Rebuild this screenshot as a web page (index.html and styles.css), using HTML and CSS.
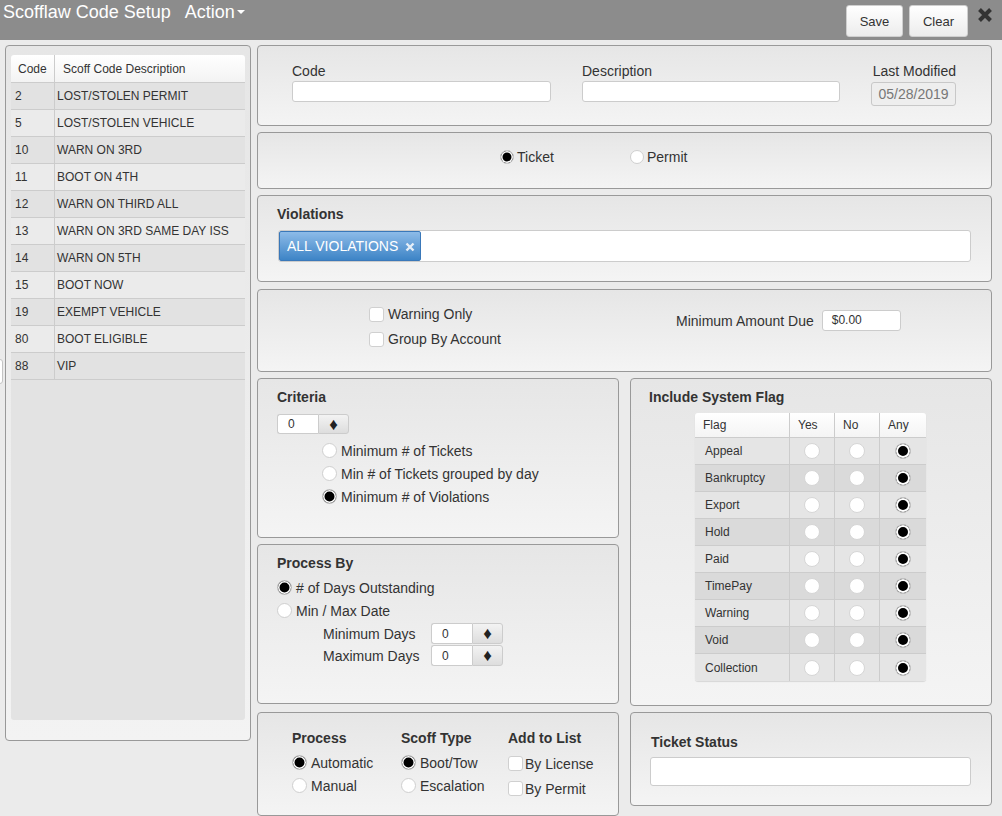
FILE: index.html
```html
<!DOCTYPE html>
<html>
<head>
<meta charset="utf-8">
<link rel="stylesheet" href="styles.css">
</head>
<body>
<header class="topbar">
  <div class="title">Scofflaw Code Setup</div>
  <div class="action">Action<span class="caret"></span></div>
  <button class="btn btn-save">Save</button>
  <button class="btn btn-clear">Clear</button>
  <svg class="close" viewBox="0 0 16 16" width="16" height="16"><path d="M2.5 2.5 L13.5 13.5 M13.5 2.5 L2.5 13.5" stroke="#333" stroke-width="4" fill="none"/></svg>
</header>
<div class="handle"></div>
<main class="main">
  <aside class="list-panel">
    <div class="list">
      <div class="row head"><span>Code</span><span>Scoff Code Description</span></div>
      <div class="row odd"><span>2</span><span>LOST/STOLEN PERMIT</span></div>
      <div class="row even"><span>5</span><span>LOST/STOLEN VEHICLE</span></div>
      <div class="row odd"><span>10</span><span>WARN ON 3RD</span></div>
      <div class="row even"><span>11</span><span>BOOT ON 4TH</span></div>
      <div class="row odd"><span>12</span><span>WARN ON THIRD ALL</span></div>
      <div class="row even"><span>13</span><span>WARN ON 3RD SAME DAY ISS</span></div>
      <div class="row odd"><span>14</span><span>WARN ON 5TH</span></div>
      <div class="row even"><span>15</span><span>BOOT NOW</span></div>
      <div class="row odd"><span>19</span><span>EXEMPT VEHICLE</span></div>
      <div class="row even"><span>80</span><span>BOOT ELIGIBLE</span></div>
      <div class="row odd"><span>88</span><span>VIP</span></div>
    </div>
  </aside>
  <section class="form">
    <div class="panel p-ident">
      <div class="field f-code"><label>Code</label><input class="txt" type="text"></div>
      <div class="field f-desc"><label>Description</label><input class="txt" type="text"></div>
      <div class="field f-mod"><label>Last Modified</label><div class="readonly">05/28/2019</div></div>
    </div>
    <div class="panel p-type">
      <div class="ritem r-ticket"><span class="radio on"></span><span>Ticket</span></div>
      <div class="ritem"><span class="radio"></span><span>Permit</span></div>
    </div>
    <div class="panel p-viol">
      <div class="ptitle">Violations</div>
      <div class="tagbox"><span class="tag">ALL VIOLATIONS<svg class="tag-x" viewBox="0 0 10 10" width="10" height="10"><path d="M1.5 1.5 L8.5 8.5 M8.5 1.5 L1.5 8.5" stroke="#e6eef7" stroke-width="2.4" fill="none"/></svg></span></div>
    </div>
    <div class="panel p-opts">
      <div class="checks">
        <div class="citem"><span class="check"></span><span>Warning Only</span></div>
        <div class="citem"><span class="check"></span><span>Group By Account</span></div>
      </div>
      <div class="amount"><span>Minimum Amount Due</span><div class="amt-input">$0.00</div></div>
    </div>
    <div class="cols">
      <div class="col">
        <div class="panel p-crit">
          <div class="ptitle">Criteria</div>
          <div class="spin s-crit"><span class="spin-val">0</span><span class="spin-btn">&#9830;</span></div>
          <div class="crit-radios">
            <div class="ritem rrow"><span class="radio"></span><span>Minimum # of Tickets</span></div>
            <div class="ritem rrow"><span class="radio"></span><span>Min # of Tickets grouped by day</span></div>
            <div class="ritem rrow"><span class="radio on"></span><span>Minimum # of Violations</span></div>
          </div>
        </div>
        <div class="panel p-proc">
          <div class="ptitle">Process By</div>
          <div class="proc-radios">
            <div class="ritem rrow"><span class="radio on"></span><span># of Days Outstanding</span></div>
            <div class="ritem rrow"><span class="radio"></span><span>Min / Max Date</span></div>
          </div>
          <div class="days">
            <div class="dayrow"><span class="daylbl">Minimum Days</span><div class="spin"><span class="spin-val">0</span><span class="spin-btn">&#9830;</span></div></div>
            <div class="dayrow"><span class="daylbl">Maximum Days</span><div class="spin"><span class="spin-val">0</span><span class="spin-btn">&#9830;</span></div></div>
          </div>
        </div>
        <div class="panel p-bottom">
          <div class="bcol bc1">
            <div class="ptitle">Process</div>
            <div class="ritem rrow"><span class="radio on"></span><span>Automatic</span></div>
            <div class="ritem rrow"><span class="radio"></span><span>Manual</span></div>
          </div>
          <div class="bcol bc2">
            <div class="ptitle">Scoff Type</div>
            <div class="ritem rrow"><span class="radio on"></span><span>Boot/Tow</span></div>
            <div class="ritem rrow"><span class="radio"></span><span>Escalation</span></div>
          </div>
          <div class="bcol bc3">
            <div class="ptitle">Add to List</div>
            <div class="citem crow"><span class="check"></span><span>By License</span></div>
            <div class="citem crow"><span class="check"></span><span>By Permit</span></div>
          </div>
        </div>
      </div>
      <div class="col">
        <div class="panel p-flag">
          <div class="ptitle">Include System Flag</div>
          <div class="flags">
            <div class="frow fhead"><span>Flag</span><span>Yes</span><span>No</span><span>Any</span></div>
            <div class="frow odd"><span>Appeal</span><span><i class="radio sm"></i></span><span><i class="radio sm"></i></span><span><i class="radio sm on"></i></span></div>
            <div class="frow even"><span>Bankruptcy</span><span><i class="radio sm"></i></span><span><i class="radio sm"></i></span><span><i class="radio sm on"></i></span></div>
            <div class="frow odd"><span>Export</span><span><i class="radio sm"></i></span><span><i class="radio sm"></i></span><span><i class="radio sm on"></i></span></div>
            <div class="frow even"><span>Hold</span><span><i class="radio sm"></i></span><span><i class="radio sm"></i></span><span><i class="radio sm on"></i></span></div>
            <div class="frow odd"><span>Paid</span><span><i class="radio sm"></i></span><span><i class="radio sm"></i></span><span><i class="radio sm on"></i></span></div>
            <div class="frow even"><span>TimePay</span><span><i class="radio sm"></i></span><span><i class="radio sm"></i></span><span><i class="radio sm on"></i></span></div>
            <div class="frow odd"><span>Warning</span><span><i class="radio sm"></i></span><span><i class="radio sm"></i></span><span><i class="radio sm on"></i></span></div>
            <div class="frow even"><span>Void</span><span><i class="radio sm"></i></span><span><i class="radio sm"></i></span><span><i class="radio sm on"></i></span></div>
            <div class="frow odd last"><span>Collection</span><span><i class="radio sm"></i></span><span><i class="radio sm"></i></span><span><i class="radio sm on"></i></span></div>
          </div>
        </div>
        <div class="panel p-status">
          <div class="ptitle">Ticket Status</div>
          <input class="txt status-input" type="text">
        </div>
      </div>
    </div>
  </section>
</main>
</body>
</html>
```
FILE: styles.css
```css
* { box-sizing: border-box; }
body {
  margin: 0;
  width: 1002px;
  height: 816px;
  overflow: hidden;
  position: relative;
  background: #ebebeb;
  font-family: "Liberation Sans", Arial, sans-serif;
  font-size: 14px;
  color: #333;
}
.topbar {
  height: 40px;
  background: #8c8c8c;
  display: flex;
  align-items: flex-start;
}
.title {
  color: #fff;
  font-size: 18px;
  line-height: 24px;
  padding-left: 3px;
}
.action {
  color: #fff;
  font-size: 18px;
  line-height: 24px;
  margin-left: 14px;
  display: flex;
  align-items: center;
}
.caret {
  width: 0;
  height: 0;
  border-top: 4px solid #fff;
  border-left: 4px solid transparent;
  border-right: 4px solid transparent;
  margin-left: 2px;
}
.btn {
  height: 32px;
  margin-top: 5px;
  padding: 0;
  background: linear-gradient(#ffffff, #ececec);
  border: 1px solid #cfcfcf;
  border-radius: 3px;
  font-family: "Liberation Sans", Arial, sans-serif;
  font-size: 13px;
  color: #333;
}
.btn-save { width: 57px; margin-left: auto; }
.btn-clear { width: 59px; margin-left: 6px; }
.close { margin: 7px 9px 0 9px; }
.handle {
  position: absolute;
  left: -8px;
  top: 359px;
  width: 11px;
  height: 25px;
  background: #fff;
  border: 1px solid #c4c4c4;
  border-radius: 3px;
}
.main {
  display: flex;
  gap: 6px;
  padding: 5px 0 0 5px;
}
.list-panel {
  width: 246px;
  height: 696px;
  border: 1px solid #999;
  border-radius: 4px;
  background: linear-gradient(#e6e6e6, #f3f3f3);
  padding: 9px 5px 20px;
}
.list {
  height: 100%;
  background: #e3e3e3;
  border-radius: 3px;
  overflow: hidden;
}
.row {
  display: grid;
  grid-template-columns: 44px 1fr;
  height: 27px;
  border-bottom: 1px solid #cccccc;
  font-size: 12px;
}
.row > span {
  display: flex;
  align-items: center;
}
.row > span:first-child {
  border-right: 1px solid #cccccc;
  padding-left: 4px;
}
.row > span:last-child { padding-left: 2px; }
.row.head {
  height: 28px;
  background: linear-gradient(#ffffff, #f3f3f3);
}
.row.head > span:first-child { padding-left: 7px; }
.row.head > span:last-child { padding-left: 8px; }
.row.odd { background: #e2e2e2; }
.row.even { background: #ebebeb; }
.form {
  width: 735px;
  display: flex;
  flex-direction: column;
}
.panel {
  border: 1px solid #999;
  border-radius: 4px;
  background: linear-gradient(#e6e6e6, #f4f4f4);
}
.ptitle {
  font-weight: bold;
  line-height: 20px;
}
.txt {
  display: block;
  height: 21px;
  border: 1px solid #cccccc;
  border-radius: 3px;
  background: #fff;
  margin: 0;
  padding: 0 6px;
}
.p-ident {
  height: 81px;
  display: flex;
  gap: 31px;
  padding: 15px 0 0 34px;
}
.field { display: flex; flex-direction: column; }
.field label { line-height: 20px; }
.f-code .txt { width: 259px; }
.f-desc .txt { width: 258px; }
.f-mod { width: 85px; }
.f-mod label { text-align: right; }
.readonly {
  height: 24px;
  margin-top: 1px;
  border: 1px solid #c8c8c8;
  border-radius: 3px;
  background: #eeeeee;
  color: #777;
  line-height: 22px;
  text-align: center;
}
.p-type {
  margin-top: 6px;
  height: 57px;
  display: flex;
  align-items: flex-start;
  padding: 16px 0 0 242px;
}
.ritem {
  display: flex;
  align-items: center;
  gap: 3px;
  line-height: 16px;
}
.r-ticket { width: 130px; }
.radio {
  display: inline-block;
  width: 14px;
  height: 14px;
  border-radius: 50%;
  background: #fff;
  border: 1px solid #cfcfcf;
  flex: none;
}
.radio.on {
  background: #000;
  box-shadow: inset 0 0 0 1.5px #fff;
}
.check {
  display: inline-block;
  width: 15px;
  height: 15px;
  border-radius: 3px;
  background: #fff;
  border: 1px solid #d0d0d0;
  flex: none;
}
.citem {
  display: flex;
  align-items: center;
  gap: 4px;
  height: 20px;
}
.p-viol {
  margin-top: 6px;
  height: 87px;
  padding: 8px 20px 0 19px;
}
.tagbox {
  margin: 6px 0 0 1px;
  height: 32px;
  background: #fff;
  border: 1px solid #cccccc;
  border-radius: 3px;
}
.tag {
  display: inline-flex;
  align-items: center;
  height: 30px;
  width: 142px;
  padding-left: 7px;
  color: #fff;
  background: linear-gradient(#8dbbe8, #3d84c6);
  border: 1px solid #3a78b9;
  border-radius: 2px;
}
.tag-x { margin-left: 7px; margin-top: 2px; }
.p-opts {
  margin-top: 7px;
  height: 83px;
  display: flex;
  align-items: flex-start;
  padding: 14px 0 0 111px;
}
.checks {
  width: 307px;
  display: flex;
  flex-direction: column;
  gap: 5px;
}
.amount {
  display: flex;
  align-items: center;
  gap: 8px;
  height: 21px;
  margin-top: 6px;
}
.amt-input {
  width: 79px;
  height: 21px;
  background: #fff;
  border: 1px solid #cccccc;
  border-radius: 3px;
  font-size: 12px;
  line-height: 19px;
  padding-left: 9px;
}
.cols {
  display: flex;
  gap: 11px;
  margin-top: 6px;
}
.col {
  width: 362px;
  display: flex;
  flex-direction: column;
}
.spin {
  display: flex;
  width: 72px;
  height: 21px;
}
.s-crit { height: 20px; margin-top: 7px; }
.spin-val {
  width: 41px;
  background: #fff;
  border: 1px solid #cccccc;
  border-right: none;
  border-radius: 3px 0 0 3px;
  font-size: 12px;
  display: flex;
  align-items: center;
  padding-left: 10px;
}
.spin-btn {
  width: 31px;
  background: linear-gradient(#f3f3f3, #dddddd);
  border: 1px solid #cccccc;
  border-radius: 0 3px 3px 0;
  font-size: 17px;
  line-height: 1;
  display: flex;
  align-items: center;
  justify-content: center;
  color: #222;
}
.p-crit {
  height: 160px;
  padding: 8px 0 0 19px;
}
.crit-radios { margin: 5px 0 0 45px; }
.rrow { height: 23px; gap: 4px; }
.rrow .radio { width: 15px; height: 15px; }
.p-proc {
  margin-top: 6px;
  height: 160px;
  padding: 8px 0 0 19px;
}
.proc-radios { margin-top: 3px; }
.days { margin: 1px 0 0 46px; display: flex; flex-direction: column; gap: 1px; }
.dayrow { display: flex; align-items: center; }
.daylbl { width: 108px; line-height: 16px; }
.p-bottom {
  margin-top: 8px;
  height: 104px;
  display: flex;
  padding: 15px 0 0 34px;
}
.bc1 { width: 109px; }
.bc2 { width: 107px; }
.bcol .ptitle { margin-bottom: 3px; }
.crow { height: 25px; gap: 2px; }
.p-flag {
  height: 328px;
  padding: 8px 0 0 18px;
}
.flags {
  margin: 6px 0 0 46px;
  width: 231px;
  border-radius: 3px;
  overflow: hidden;
  box-shadow: 0 1px 1px rgba(0,0,0,0.12);
  font-size: 12px;
}
.frow {
  display: grid;
  grid-template-columns: 95px 45px 45px 46px;
  height: 27px;
  border-bottom: 1px solid #cccccc;
}
.frow > span {
  display: flex;
  align-items: center;
  justify-content: center;
  border-right: 1px solid #cccccc;
}
.frow > span:last-child { border-right: none; }
.frow > span:first-child { justify-content: flex-start; padding-left: 10px; }
.frow.fhead {
  height: 25px;
  background: linear-gradient(#ffffff, #f4f4f4);
}
.frow.fhead > span { justify-content: flex-start; padding-left: 8px; }
.frow.odd { background: #e5e5e5; }
.frow.even { background: #dadada; }
.frow.last { border-bottom: none; }
.radio.sm {
  width: 16px;
  height: 16px;
  border-color: #d6d6d6;
}
.radio.sm.on {
  box-shadow: inset 0 0 0 2px #fff;
  border-color: #c8c8c8;
}
.p-status {
  margin-top: 6px;
  height: 94px;
  padding: 19px 20px 0 20px;
}
.status-input {
  margin: 5px 0 0 -1px;
  width: 321px;
  height: 29px;
}
```
